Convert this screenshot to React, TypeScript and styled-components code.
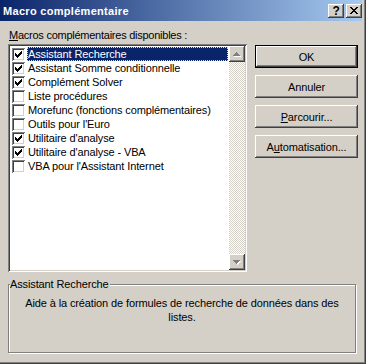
import React from 'react';
import styled, { createGlobalStyle } from 'styled-components';

const GlobalStyle = createGlobalStyle`
  html, body {
    margin: 0;
    padding: 0;
    background: #d4d0c8;
  }
`;

const face = '#d4d0c8';

// classic win32 bevels
const raised = `inset -1px -1px #404040, inset 1px 1px #fff, inset -2px -2px #808080, inset 2px 2px ${face}`;
const sunken = `inset 1px 1px #808080, inset -1px -1px #fff, inset 2px 2px #404040, inset -2px -2px ${face}`;

const Window = styled.div`
  width: 366px;
  height: 364px;
  box-sizing: border-box;
  padding-right: 4px;
  background: ${face};
  box-shadow: inset -1px -1px #404040, inset -2px -2px #808080;
  display: flex;
  flex-direction: column;
  font-family: 'Liberation Sans', Arial, sans-serif;
  font-size: 11px;
  letter-spacing: -0.12px;
  color: #000;
`;

const TitleBar = styled.div`
  flex: none;
  height: 21px;
  padding: 0 0 0 3px;
  display: flex;
  align-items: center;
  background: linear-gradient(to right, #0a246a, #a6caf0);
`;

const Title = styled.span`
  flex: 1;
  color: #fff;
  font-weight: bold;
  letter-spacing: 0.3px;
`;

const CaptionButtons = styled.div`
  display: flex;
  gap: 2px;
`;

const CaptionButton = styled.div`
  width: 16px;
  height: 14px;
  box-sizing: border-box;
  background: ${face};
  box-shadow: ${raised};
  display: flex;
  align-items: center;
  justify-content: center;
  font-weight: bold;
  font-size: 12px;
  line-height: 14px;
`;

const Body = styled.div`
  flex: 1;
  display: flex;
  flex-direction: column;
  padding-left: 8px;
`;

const Top = styled.div`
  display: grid;
  grid-template-columns: 239px 103px;
  column-gap: 8px;
`;

const Column = styled.div`
  display: flex;
  flex-direction: column;
`;

const Caption = styled.div`
  margin: 8px 0 2px 1px;
  line-height: 13px;
  letter-spacing: -0.25px;
`;

const ListBox = styled.div`
  height: 228px;
  box-sizing: border-box;
  padding: 2px;
  box-shadow: ${sunken};
  display: flex;
`;

const Items = styled.div`
  flex: 1;
  background: #fff;
  padding-top: 1px;
`;

const Row = styled.div`
  height: 14px;
  display: flex;
  align-items: center;
  padding-left: 2px;
`;

const Box = styled.div`
  width: 13px;
  height: 13px;
  box-sizing: border-box;
  background: #fff;
  box-shadow: ${sunken};
  display: flex;
  align-items: center;
  justify-content: center;
  flex: none;
`;

const ItemText = styled.span<{ $selected?: boolean }>`
  flex: 1;
  margin: 0 1px 0 2px;
  padding: 0 0 0 1px;
  height: 14px;
  line-height: 14px;
  box-sizing: border-box;
  white-space: nowrap;
  background: ${(p) => (p.$selected ? '#0a246a' : 'transparent')};
  color: ${(p) => (p.$selected ? '#fff' : '#000')};
  outline: ${(p) => (p.$selected ? '1px dotted #f5db95' : 'none')};
  outline-offset: -1px;
`;

const ScrollBar = styled.div`
  width: 16px;
  display: flex;
  flex-direction: column;
`;

const ScrollButton = styled.div`
  width: 16px;
  height: 16px;
  box-sizing: border-box;
  background: ${face};
  box-shadow: ${raised};
  display: flex;
  align-items: center;
  justify-content: center;
`;

const Track = styled.div`
  flex: 1;
  background-color: #fff;
  background-image: conic-gradient(${face} 25%, #fff 0 50%, ${face} 0 75%, #fff 0);
  background-size: 2px 2px;
`;

const Buttons = styled.div`
  display: flex;
  flex-direction: column;
  gap: 7px;
  padding-top: 24px;
`;

const Button = styled.div<{ $default?: boolean }>`
  height: 23px;
  box-sizing: border-box;
  display: flex;
  align-items: center;
  justify-content: center;
  background: ${face};
  box-shadow: ${(p) =>
    p.$default
      ? `inset 0 0 0 1px #000, inset -2px -2px #404040, inset 2px 2px #fff, inset -3px -3px #808080`
      : raised};
`;

const Group = styled.fieldset`
  margin: 6px 6px 0 0;
  padding: 5px 0 0;
  height: 75px;
  box-sizing: border-box;
  border: 1px solid #808080;
  box-shadow: inset 1px 1px #fff, 1px 1px #fff;
  min-width: 0;
`;

const Legend = styled.legend`
  margin-left: 1px;
  padding: 0 1px 0 0;
  line-height: 13px;
  background: ${face};
`;

const Description = styled.div`
  text-align: center;
  line-height: 14px;
`;

const Check = () => (
  <svg width="7" height="7" viewBox="0 0 7 7" shapeRendering="crispEdges">
    <path d="M0 2h1v3H0z M1 3h1v3H1z M2 4h1v3H2z M3 3h1v3H3z M4 2h1v3H4z M5 1h1v3H5z M6 0h1v3H6z" fill="#000" />
  </svg>
);

const Arrow = ({ down }: { down?: boolean }) => {
  const d = 'M3 0h1v1H3z M2 1h3v1H2z M1 2h5v1H1z M0 3h7v1H0z';
  return (
    <svg width="8" height="5" viewBox="0 0 8 5" shapeRendering="crispEdges" style={down ? { transform: 'scaleY(-1)' } : undefined}>
      <path d={d} fill="#fff" transform={down ? 'translate(1 0)' : 'translate(1 1)'} />
      <path d={d} fill="#808080" transform={down ? 'translate(0 1)' : undefined} />
    </svg>
  );
};

const CloseGlyph = () => (
  <svg width="8" height="7" viewBox="0 0 8 7" shapeRendering="crispEdges">
    <path
      d="M0 0h2v1H0z M6 0h2v1H6z M1 1h2v1H1z M5 1h2v1H5z M2 2h4v1H2z M3 3h2v1H3z M2 4h4v1H2z M1 5h2v1H1z M5 5h2v1H5z M0 6h2v1H0z M6 6h2v1H6z"
      fill="#000"
    />
  </svg>
);

const items = [
  { label: 'Assistant Recherche', checked: true },
  { label: 'Assistant Somme conditionnelle', checked: true },
  { label: 'Complément Solver', checked: true },
  { label: 'Liste procédures', checked: false },
  { label: 'Morefunc (fonctions complémentaires)', checked: false },
  { label: "Outils pour l'Euro", checked: false },
  { label: "Utilitaire d'analyse", checked: true },
  { label: "Utilitaire d'analyse - VBA", checked: true },
  { label: "VBA pour l'Assistant Internet", checked: false },
];

export default function App() {
  return (
    <>
      <GlobalStyle />
      <Window>
        <TitleBar>
          <Title>Macro complémentaire</Title>
          <CaptionButtons>
            <CaptionButton>?</CaptionButton>
            <CaptionButton>
              <CloseGlyph />
            </CaptionButton>
          </CaptionButtons>
        </TitleBar>
        <Body>
          <Top>
            <Column>
              <Caption>
                <u>M</u>acros complémentaires disponibles :
              </Caption>
              <ListBox>
                <Items>
                  {items.map((item, i) => (
                    <Row key={item.label}>
                      <Box>{item.checked && <Check />}</Box>
                      <ItemText $selected={i === 0}>{item.label}</ItemText>
                    </Row>
                  ))}
                </Items>
                <ScrollBar>
                  <ScrollButton>
                    <Arrow />
                  </ScrollButton>
                  <Track />
                  <ScrollButton>
                    <Arrow down />
                  </ScrollButton>
                </ScrollBar>
              </ListBox>
            </Column>
            <Buttons>
              <Button $default>OK</Button>
              <Button>Annuler</Button>
              <Button>
                <u>P</u>arcourir...
              </Button>
              <Button>
                A<u>u</u>tomatisation...
              </Button>
            </Buttons>
          </Top>
          <Group>
            <Legend>Assistant Recherche</Legend>
            <Description>
              Aide à la création de formules de recherche de données dans des
              <br />
              listes.
            </Description>
          </Group>
        </Body>
      </Window>
    </>
  );
}
